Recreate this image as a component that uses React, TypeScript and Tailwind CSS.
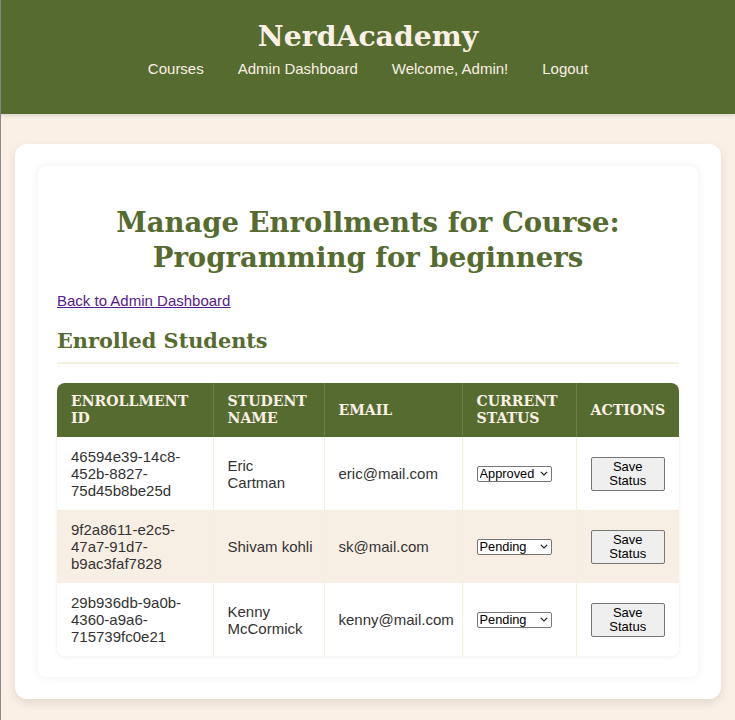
import React from "react";

type Enrollment = {
  id: string[];
  name: string;
  email: string;
  status: string;
};

const enrollments: Enrollment[] = [
  {
    id: ["46594e39-14c8-", "452b-8827-", "75d45b8be25d"],
    name: "Eric Cartman",
    email: "eric@mail.com",
    status: "Approved",
  },
  {
    id: ["9f2a8611-e2c5-", "47a7-91d7-", "b9ac3faf7828"],
    name: "Shivam kohli",
    email: "sk@mail.com",
    status: "Pending",
  },
  {
    id: ["29b936db-9a0b-", "4360-a9a6-", "715739fc0e21"],
    name: "Kenny McCormick",
    email: "kenny@mail.com",
    status: "Pending",
  },
];

const serif = "font-['DejaVu_Serif',Georgia,serif] font-bold";

const Header = () => {
  return (
    <header className="h-[114px] bg-[#556b2f] pt-[20px] text-center shadow-[0_2px_4px_rgba(0,0,0,0.12)]">
      <h1 className={`${serif} text-[28.3px] leading-[33px] text-[#faf0e6]`}>
        NerdAcademy
      </h1>
      <nav className="mt-[7px] flex justify-center gap-[34px] text-[15px] leading-[17px] text-[#faf0e6]">
        <a href="#">Courses</a>
        <a href="#">Admin Dashboard</a>
        <span>Welcome, Admin!</span>
        <a href="#">Logout</a>
      </nav>
    </header>
  );
};

const StatusSelect = ({ value }: { value: string }) => {
  return (
    <div className="relative w-[75px]">
      <select
        defaultValue={value}
        className="block h-[16px] w-[75px] appearance-none rounded-[2px] border border-[#767676] bg-white pl-[2px] text-[12.8px] leading-[14px] text-black"
      >
        <option>Pending</option>
        <option>Approved</option>
        <option>Rejected</option>
      </select>
      <svg
        className="pointer-events-none absolute top-[5px] right-[4px]"
        width="8"
        height="5"
        viewBox="0 0 8 5"
        fill="none"
      >
        <path d="M0.8 0.8 L4 4 L7.2 0.8" stroke="#222" strokeWidth="1.2" />
      </svg>
    </div>
  );
};

const EnrollmentRow = ({
  item,
  striped,
}: {
  item: Enrollment;
  striped: boolean;
}) => {
  const cell = "px-[14px] py-[11px] align-middle border-r border-[#f3f1de]";
  return (
    <tr className={striped ? "bg-[#f8efe4]" : "bg-white"}>
      <td className={cell}>
        {item.id.map((part, i) => (
          <div key={i}>{part}</div>
        ))}
      </td>
      <td className="border-r border-[#f3f1de] py-[11px] pr-[10px] pl-[14px] align-middle">
        {item.name}
      </td>
      <td className={cell}>{item.email}</td>
      <td className={cell}>
        <StatusSelect value={item.status} />
      </td>
      <td className="px-[14px] py-[11px] align-middle">
        <button className="h-[34px] w-full rounded-[2px] border border-[#767676] bg-[#efefef] px-[6px] text-[13px] leading-[14px] text-black">
          Save Status
        </button>
      </td>
    </tr>
  );
};

const EnrollmentTable = () => {
  const th = "px-[14px] py-[10px] text-left align-middle border-r border-[#6c7f4b]";
  return (
    <div className="mt-[19px] overflow-hidden rounded-lg shadow-[0_1px_4px_rgba(0,0,0,0.07)]">
      <table className="w-full table-fixed border-collapse text-[15px] leading-[17px] text-[#333]">
        <colgroup>
          <col className="w-[156px]" />
          <col className="w-[111px]" />
          <col className="w-[138px]" />
          <col className="w-[114px]" />
          <col className="w-[103px]" />
        </colgroup>
        <thead>
          <tr
            className={`h-[54px] bg-[#556b2f] ${serif} text-[14.1px] leading-[17px] text-[#faf0e6] uppercase`}
          >
            <th className={th}>Enrollment ID</th>
            <th className={th}>Student Name</th>
            <th className={th}>Email</th>
            <th className={th}>Current Status</th>
            <th className="px-[14px] py-[10px] text-left align-middle">
              Actions
            </th>
          </tr>
        </thead>
        <tbody>
          {enrollments.map((item, index) => (
            <EnrollmentRow key={index} item={item} striped={index % 2 === 1} />
          ))}
        </tbody>
      </table>
    </div>
  );
};

const App = () => {
  return (
    <div className="min-h-screen border-l border-[#8a8a8a] bg-[#faf0e6] font-['Liberation_Sans',Arial,sans-serif]">
      <Header />
      <main className="mx-[14px] mt-[30px] pb-[20px]">
        <div className="rounded-xl bg-white px-[23px] py-[22px] shadow-[0_4px_10px_rgba(0,0,0,0.1)]">
          <div className="rounded-lg bg-white px-[19px] pt-[20px] pb-[21px] shadow-[0_0_10px_rgba(0,0,0,0.07)]">
            <h2
              className={`${serif} mt-[19px] text-center text-[27.5px] leading-[35px] text-[#556b2f]`}
            >
              Manage Enrollments for Course:
              <br />
              Programming for beginners
            </h2>
            <a
              href="#"
              className="mt-[17px] inline-block text-[15px] leading-[17px] text-[#551a8b] underline"
            >
              Back to Admin Dashboard
            </a>
            <h3
              className={`${serif} mt-[16px] border-b-2 border-[#f3f1de] pb-[9px] text-[20.8px] leading-[24px] text-[#556b2f]`}
            >
              Enrolled Students
            </h3>
            <EnrollmentTable />
          </div>
        </div>
      </main>
    </div>
  );
};

export default App;
